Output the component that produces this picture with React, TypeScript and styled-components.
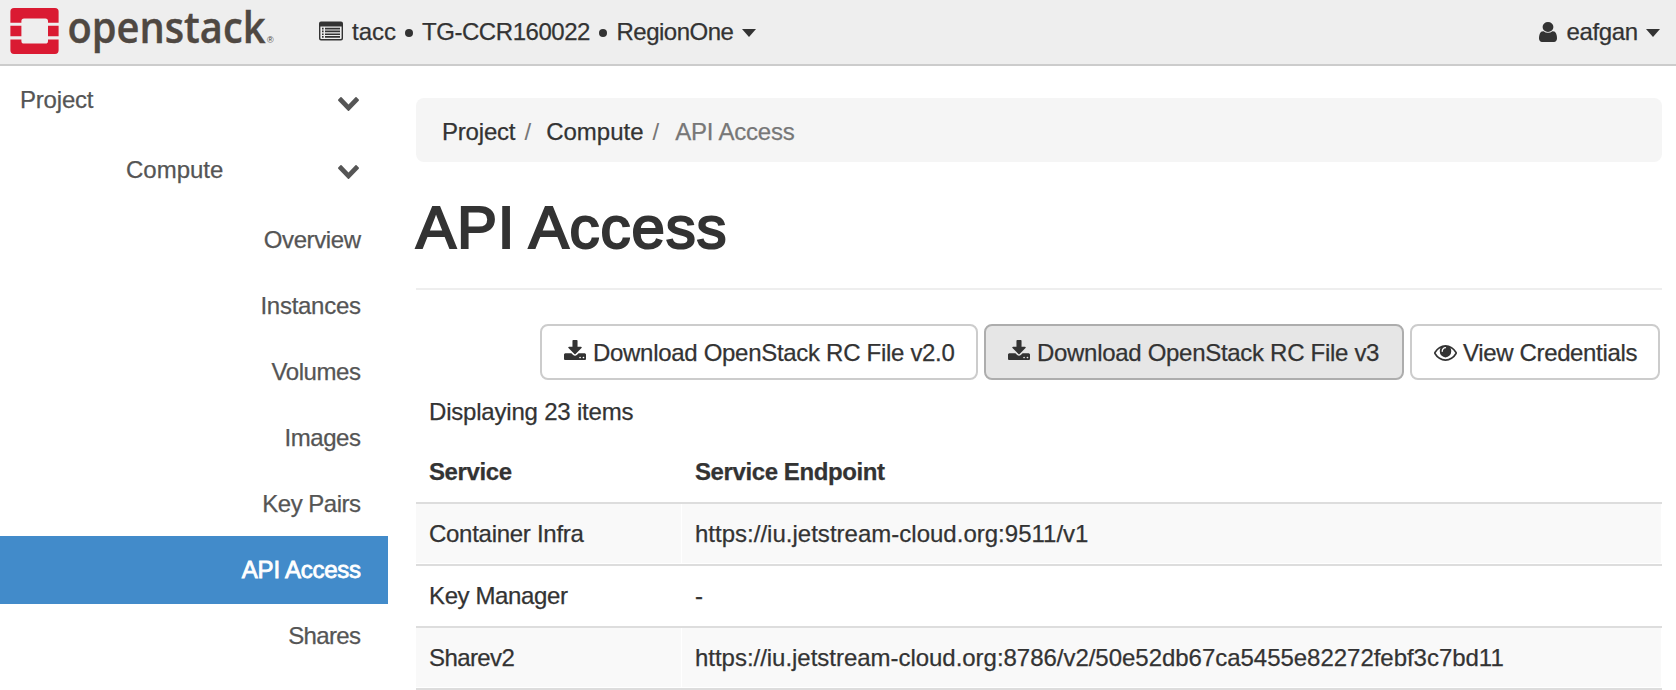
import React from "react";
import styled, { createGlobalStyle } from "styled-components";

const GlobalStyle = createGlobalStyle`
  * { box-sizing: border-box; }
  html, body { margin: 0; padding: 0; }
  body {
    width: 1676px;
    height: 690px;
    overflow: hidden;
    background: #fff;
    color: #333;
    font-family: "Liberation Sans", Arial, sans-serif;
    font-size: 24px;
    line-height: 34px;
  }
`;

const Label = styled.span<{ $track?: number }>`
  white-space: nowrap;
  letter-spacing: ${(p) => p.$track ?? 0}px;
  margin-right: ${(p) => -(p.$track ?? 0)}px;
  -webkit-text-stroke: 0.25px currentColor;
`;

const Header = styled.header`
  display: flex;
  align-items: center;
  height: 66px;
  padding: 0 16px 0 10px;
  background: #eee;
  border-bottom: 2px solid #ccc;
`;

const Brand = styled.svg`
  display: block;
  flex: none;
  width: 270px;
  height: 64px;
  overflow: visible;
`;

const ContextMenu = styled.div`
  display: flex;
  align-items: center;
  flex: 1;
  margin-left: 39px;
`;

const UserMenu = styled.div`
  display: flex;
  align-items: center;
`;

const Icon = styled.svg<{ $w: number; $h: number; $gap?: number; $lift?: number }>`
  display: block;
  flex: none;
  width: ${(p) => p.$w}px;
  height: ${(p) => p.$h}px;
  margin-right: ${(p) => p.$gap ?? 0}px;
  margin-bottom: ${(p) => p.$lift ?? 0}px;
  fill: currentColor;
`;

const Dot = styled.i`
  flex: none;
  width: 8px;
  height: 8px;
  margin: 2px 9px 0;
  border-radius: 50%;
  background: currentColor;
`;

const Caret = styled.i`
  flex: none;
  margin: 1px 0 0 8px;
  border: 7px solid transparent;
  border-top: 8px solid currentColor;
  border-bottom: 0;
`;

const Body = styled.div`
  display: flex;
  height: 624px;
`;

const Sidebar = styled.nav`
  flex: none;
  width: 388px;
  color: #555;
`;

const Group = styled.div<{ $height: number; $indent: number; $drop: number }>`
  display: flex;
  align-items: center;
  justify-content: space-between;
  height: ${(p) => p.$height}px;
  padding: 0 29px 0 ${(p) => p.$indent}px;
  svg { margin-top: ${(p) => p.$drop}px; }
`;

const Item = styled.a<{ $active?: boolean }>`
  display: flex;
  align-items: center;
  justify-content: flex-end;
  height: 68px;
  margin-bottom: -2px;
  padding-right: 27px;
  color: ${(p) => (p.$active ? "#fff" : "inherit")};
  background: ${(p) => (p.$active ? "#428bca" : "transparent")};
  ${Label} { -webkit-text-stroke-width: ${(p) => (p.$active ? 0.8 : 0.25)}px; }
`;

const Main = styled.main`
  flex: 1;
  padding: 32px 14px 0 28px;
`;

const Breadcrumb = styled.div`
  display: flex;
  align-items: center;
  height: 64px;
  padding: 4px 26px 0;
  border-radius: 8px;
  background: #f5f5f5;
`;

const Slash = styled.span`
  margin: 0 15px 0 9px;
  color: #777;
`;

const Current = styled(Label)`
  margin-left: 1px;
  color: #777;
`;

const Title = styled.h1`
  height: 96px;
  margin: 32px 0 0;
  border-bottom: 2px solid #eee;
  font-size: 60px;
  font-weight: 400;
  line-height: 67px;
  letter-spacing: 0.9px;
  word-spacing: -1px;
  -webkit-text-stroke: 2.1px #333;
`;

const Actions = styled.div`
  display: flex;
  justify-content: flex-end;
  gap: 6px;
  padding: 34px 2px 0 0;
`;

const Button = styled.button<{ $width: number; $pressed?: boolean }>`
  display: flex;
  align-items: center;
  width: ${(p) => p.$width}px;
  height: 56px;
  padding: 1px 0 0 22px;
  border: 2px solid ${(p) => (p.$pressed ? "#adadad" : "#ccc")};
  border-radius: 8px;
  background: ${(p) => (p.$pressed ? "#e6e6e6" : "#fff")};
  color: #333;
  font: inherit;
`;

const Count = styled.div`
  padding: 15px 0 0 13px;
`;

const Table = styled.div`
  margin-top: 13px;
`;

const Row = styled.div<{ $striped?: boolean; $head?: boolean }>`
  display: grid;
  grid-template-columns: 265px 979px;
  column-gap: 1px;
  height: 62px;
  padding-bottom: ${(p) => (p.$head ? 0 : 1)}px;
  border-bottom: 2px solid #ddd;
  font-weight: ${(p) => (p.$head ? 700 : 400)};
  & > div { background: ${(p) => (p.$striped ? "#f9f9f9" : "transparent")}; }
`;

const Cell = styled.div`
  display: flex;
  align-items: center;
  padding-left: 13px;
`;

const ChevronDown = () => (
  <Icon $w={21} $h={14} viewBox="90 533 1612 1035" preserveAspectRatio="none">
    <path d="M1683 808l-742 741q-19 19-45 19t-45-19l-742-741q-19-19-19-45.5t19-45.5l166-165q19-19 45-19t45 19l531 531 531-531q19-19 45-19t45 19l166 165q19 19 19 45.5t-19 45.5z" />
  </Icon>
);

const ListIcon = () => (
  <Icon $w={24} $h={20} $gap={9} $lift={2} viewBox="0 0 24 20">
    <path
      fillRule="evenodd"
      d="M2 .5h20a2 2 0 0 1 2 2v15a2 2 0 0 1-2 2H2a2 2 0 0 1-2-2v-15a2 2 0 0 1 2-2zM1.4 5.4v11.9q0 .8.8.8h19.6q.8 0 .8-.8V5.4z"
    />
    <path d="M3 6.8h1.6v1.6H3zM6 6.8h15v1.6H6zM3 9.6h1.6v1.6H3zM6 9.6h15v1.6H6zM3 12.4h1.6V14H3zM6 12.4h15V14H6zM3 15.1h1.6v1.6H3zM6 15.1h15v1.6H6z" />
  </Icon>
);

const UserIcon = () => (
  <Icon $w={18} $h={20} $gap={10} viewBox="256 128 1280 1536" preserveAspectRatio="none">
    <path d="M1536 1399q0 109-62.5 187t-150.5 78h-854q-88 0-150.5-78t-62.5-187q0-85 8.5-160.5t31.5-152 58.5-131 94-89 134.5-34.5q131 128 313 128t313-128q76 0 134.5 34.5t94 89 58.5 131 31.5 152 8.5 160.5zm-256-887q0 159-112.5 271.5t-271.5 112.5-271.5-112.5-112.5-271.5 112.5-271.5 271.5-112.5 271.5 112.5 112.5 271.5z" />
  </Icon>
);

const DownloadIcon = () => (
  <Icon $w={22} $h={20} $gap={7} $lift={6} viewBox="0 0 1664 1536" preserveAspectRatio="none">
    <path d="M1280 1344q0-26-19-45t-45-19-45 19-19 45 19 45 45 19 45-19 19-45zm256 0q0-26-19-45t-45-19-45 19-19 45 19 45 45 19 45-19 19-45zm128-224v320q0 40-28 68t-68 28h-1472q-40 0-68-28t-28-68v-320q0-40 28-68t68-28h465l135 136q58 56 136 56t136-56l136-136h464q40 0 68 28t28 68zm-325-569q17 41-14 70l-448 448q-18 19-45 19t-45-19l-448-448q-31-29-14-70 17-39 59-39h256v-448q0-26 19-45t45-19h256q26 0 45 19t19 45v448h256q42 0 59 39z" />
  </Icon>
);

const EyeIcon = () => (
  <Icon $w={23} $h={16} $gap={6} viewBox="0 384 1792 1152" preserveAspectRatio="none">
    <path d="M1664 960q-152-236-381-353 61 104 61 225 0 185-131.5 316.5t-316.5 131.5-316.5-131.5-131.5-316.5q0-121 61-225-229 117-381 353 133 205 333.5 326.5t434.5 121.5 434.5-121.5 333.5-326.5zm-720-384q0-20-14-34t-34-14q-125 0-214.5 89.5t-89.5 214.5q0 20 14 34t34 14 34-14 14-34q0-86 61-147t147-61q20 0 34-14t14-34zm848 384q0 34-20 69-140 230-376.5 368.5t-499.5 138.5-499.5-139-376.5-368q-20-35-20-69t20-69q140-229 376.5-368t499.5-139 499.5 139 376.5 368q20 35 20 69z" />
  </Icon>
);

const Logo = () => (
  <Brand viewBox="10 0 270 64" role="img" aria-label="openstack">
    <g fill="#da1a32">
      <path d="M14 8H55a3.6 3.6 0 0 1 3.6 3.6V22.8H48V21a2.6 2.6 0 0 0-2.6-2.6H24a2.6 2.6 0 0 0-2.6 2.6v1.8H10.4V11.6A3.6 3.6 0 0 1 14 8z" />
      <path d="M10.4 25.8h11v10.4h-11zM48 25.8h10.6v10.4H48z" />
      <path d="M10.4 39.4h11V41a2.6 2.6 0 0 0 2.6 2.6h21.4A2.6 2.6 0 0 0 48 41v-1.6h10.6v10.9a3.6 3.6 0 0 1-3.6 3.6H14a3.6 3.6 0 0 1-3.6-3.6z" />
    </g>
    <text
      x="67.5"
      y="42.7"
      fill="#4f4842"
      stroke="#4f4842"
      strokeWidth="0.4"
      fontFamily="Open Sans"
      fontWeight="600"
      fontSize="43"
      textLength="198"
      lengthAdjust="spacingAndGlyphs"
    >
      openstack
    </text>
    <text x="267" y="42.7" fill="#4f4842" fontFamily="Liberation Sans" fontSize="9">®</text>
  </Brand>
);

const items = [
  { name: "Overview", track: -0.4 },
  { name: "Instances", track: -0.27 },
  { name: "Volumes", track: -0.42 },
  { name: "Images", track: -0.42 },
  { name: "Key Pairs", track: -0.5 },
  { name: "API Access", track: -0.25 },
  { name: "Shares", track: -0.65 },
];

const services = [
  { name: "Container Infra", track: -0.28, url: "https://iu.jetstream-cloud.org:9511/v1", urlTrack: 0.01 },
  { name: "Key Manager", track: -0.38, url: "-", urlTrack: 0 },
  {
    name: "Sharev2",
    track: -0.6,
    url: "https://iu.jetstream-cloud.org:8786/v2/50e52db67ca5455e82272febf3c7bd11",
    urlTrack: -0.03,
  },
];

export default function App() {
  return (
    <>
      <GlobalStyle />
      <Header>
        <Logo />
        <ContextMenu>
          <ListIcon />
          <Label>tacc</Label>
          <Dot />
          <Label $track={-0.45}>TG-CCR160022</Label>
          <Dot />
          <Label $track={-0.5}>RegionOne</Label>
          <Caret />
        </ContextMenu>
        <UserMenu>
          <UserIcon />
          <Label $track={-0.4}>eafgan</Label>
          <Caret />
        </UserMenu>
      </Header>
      <Body>
        <Sidebar>
          <Group $height={68} $indent={20} $drop={7}>
            <Label $track={-0.2}>Project</Label>
            <ChevronDown />
          </Group>
          <Group $height={72} $indent={126} $drop={4}>
            <Label>Compute</Label>
            <ChevronDown />
          </Group>
          {items.map((item) => (
            <Item key={item.name} $active={item.name === "API Access"}>
              <Label $track={item.track}>{item.name}</Label>
            </Item>
          ))}
        </Sidebar>
        <Main>
          <Breadcrumb>
            <Label $track={-0.2}>Project</Label>
            <Slash>/</Slash>
            <Label>Compute</Label>
            <Slash>/</Slash>
            <Current $track={-0.2}>API Access</Current>
          </Breadcrumb>
          <Title>API Access</Title>
          <Actions>
            <Button $width={438}>
              <DownloadIcon />
              <Label $track={-0.3}>Download OpenStack RC File v2.0</Label>
            </Button>
            <Button $width={420} $pressed>
              <DownloadIcon />
              <Label $track={-0.3}>Download OpenStack RC File v3</Label>
            </Button>
            <Button $width={250}>
              <EyeIcon />
              <Label $track={-0.35}>View Credentials</Label>
            </Button>
          </Actions>
          <Count>
            <Label $track={-0.2}>Displaying 23 items</Label>
          </Count>
          <Table>
            <Row $head>
              <Cell><Label $track={-0.4}>Service</Label></Cell>
              <Cell><Label $track={-0.4}>Service Endpoint</Label></Cell>
            </Row>
            {services.map((s, i) => (
              <Row key={s.name} $striped={i % 2 === 0}>
                <Cell><Label $track={s.track}>{s.name}</Label></Cell>
                <Cell><Label $track={s.urlTrack}>{s.url}</Label></Cell>
              </Row>
            ))}
          </Table>
        </Main>
      </Body>
    </>
  );
}
